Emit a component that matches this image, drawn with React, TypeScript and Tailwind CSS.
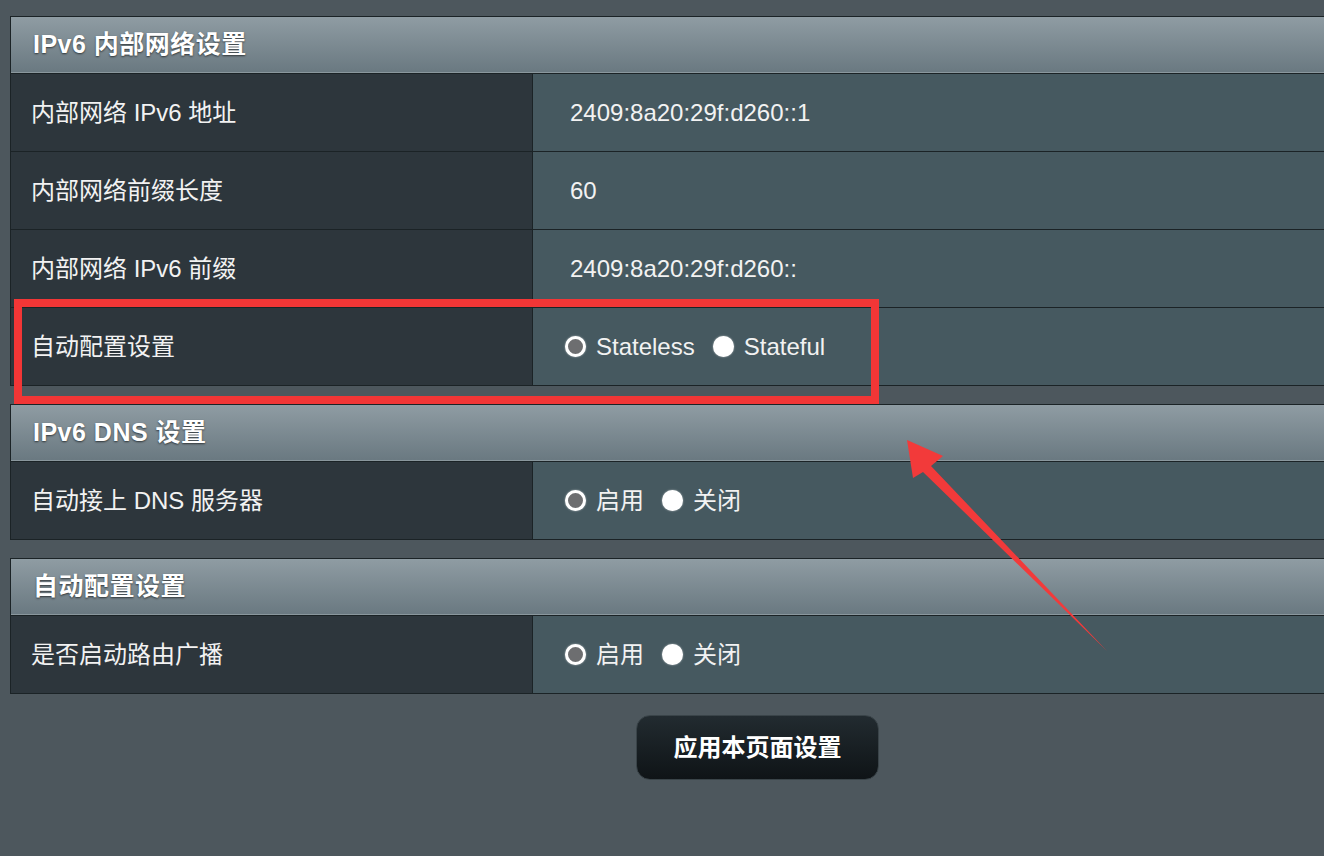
import React from 'react';

const font = { fontFamily: '"Liberation Sans", Arial, "Noto Sans CJK SC", sans-serif' };

function Radio({ on }: { on?: boolean }) {
  return on ? (
    <span className="inline-block shrink-0 w-[21px] h-[21px] rounded-full bg-white shadow-[0_0_2px_rgba(255,255,255,0.6)]" />
  ) : (
    <span className="inline-block shrink-0 w-[21px] h-[21px] rounded-full bg-[#6d6e70] border-[3px] border-white shadow-[0_0_2px_rgba(255,255,255,0.6)]" />
  );
}

function Header({ title }: { title: string }) {
  return (
    <div className="h-[56px] flex items-center pl-[22px] bg-gradient-to-b from-[#8f9ca3] to-[#6a7981] border-b border-[#8a979d] text-[25px] font-bold tracking-[0.5px] text-white [text-shadow:0_1px_2px_rgba(0,0,0,0.6)]">
      {title}
    </div>
  );
}

function Row({ label, children }: { label: string; children: React.ReactNode }) {
  return (
    <div className="flex h-[78px] border-t border-[#1b2326]">
      <div className="w-[522px] shrink-0 bg-[#2d363c] border-r border-[#1b2326] flex items-center pl-[20px] text-[24px] text-[#f2f2f2]">
        {label}
      </div>
      <div className="flex-1 bg-[#465960] flex items-center pl-[37px] text-[24px] text-[#f2f2f2]">{children}</div>
    </div>
  );
}

function Choice({ a, b }: { a: string; b: string }) {
  return (
    <div className="flex items-center -ml-[5px]">
      <Radio />
      <span className="ml-[10px] mr-[18px]">{a}</span>
      <Radio on />
      <span className="ml-[10px]">{b}</span>
    </div>
  );
}

export default function App() {
  return (
    <div className="relative w-[1324px] h-[856px] overflow-hidden bg-[#4d575d]" style={font}>
      <div className="pt-[16px] pl-[10px] flex flex-col">
        <div className="w-[1330px] border border-[#1b2326]">
          <Header title="IPv6 内部网络设置" />
          <Row label="内部网络 IPv6 地址">2409:8a20:29f:d260::1</Row>
          <Row label="内部网络前缀长度">60</Row>
          <Row label="内部网络 IPv6 前缀">2409:8a20:29f:d260::</Row>
          <Row label="自动配置设置">
            <Choice a="Stateless" b="Stateful" />
          </Row>
        </div>

        <div className="w-[1330px] border border-[#1b2326] mt-[18px]">
          <Header title="IPv6 DNS 设置" />
          <Row label="自动接上 DNS 服务器">
            <Choice a="启用" b="关闭" />
          </Row>
        </div>

        <div className="w-[1330px] border border-[#1b2326] mt-[18px]">
          <Header title="自动配置设置" />
          <Row label="是否启动路由广播">
            <Choice a="启用" b="关闭" />
          </Row>
        </div>

        <div className="flex pl-[626px] mt-[21px]">
          <button className="w-[243px] h-[65px] rounded-[14px] bg-gradient-to-b from-[#222b30] to-[#0f1417] text-white text-[24px] font-bold border border-[#3a4449]">
            应用本页面设置
          </button>
        </div>
      </div>

      {/* annotation */}
      <div className="absolute left-[14px] top-[299px] w-[865px] h-[105px] border-[8px] border-[#f23636]" />
      <svg className="absolute left-0 top-0" width="1324" height="856">
        <polygon points="907,440 943,456 931,466 1107,651 923,472 913,478" fill="#f23a3a" />
      </svg>
    </div>
  );
}
